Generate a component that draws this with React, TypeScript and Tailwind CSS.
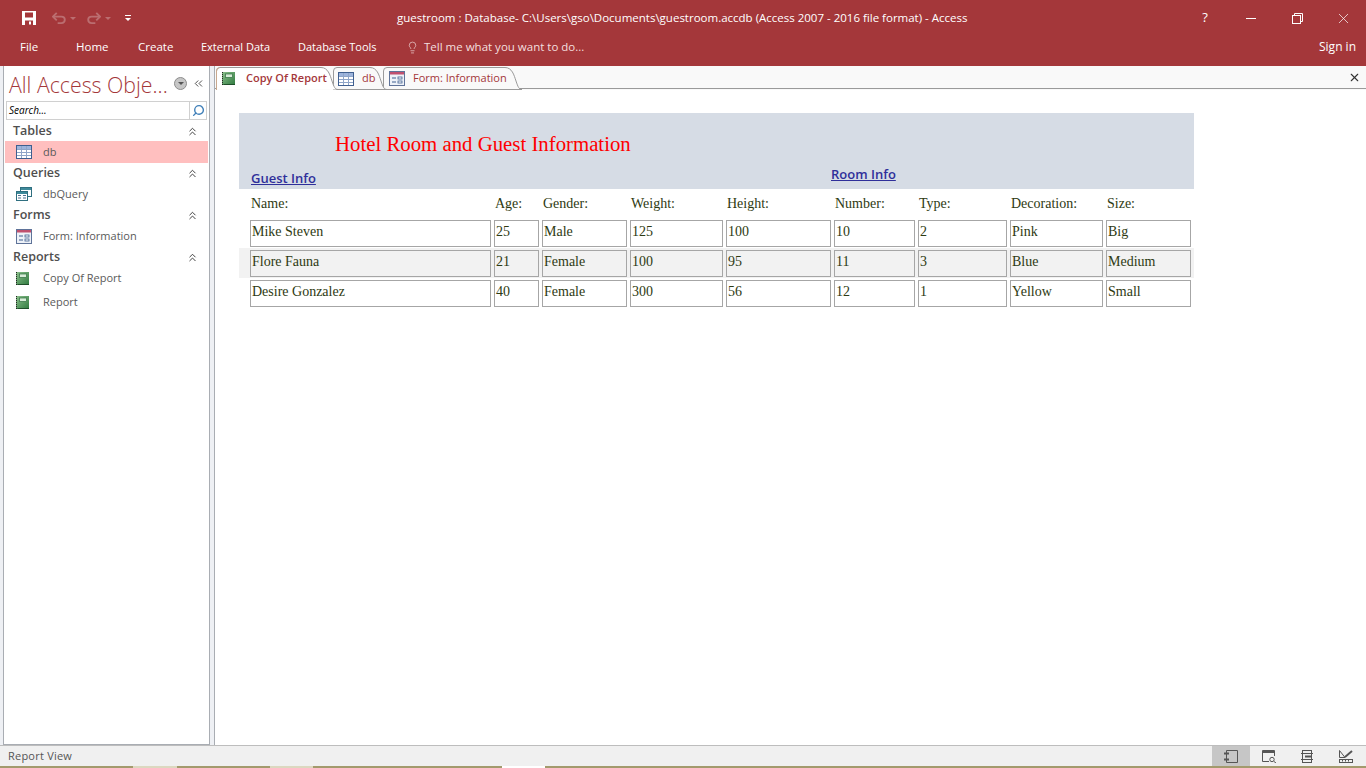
import { ChevronsUp, ChevronsLeft, Search, X, Lightbulb } from "lucide-react";

const uiFont = "font-['Open_Sans',sans-serif]";
const serifFont = "font-['Liberation_Serif',serif]";

function TableIcon({ className = "" }: { className?: string }) {
  return (
    <svg viewBox="0 0 16 14" className={className}>
      <rect x="0.5" y="0.5" width="15" height="13" fill="#fff" stroke="#3f5f8f" />
      <rect x="1" y="1" width="14" height="3" fill="#9db4dc" />
      <path d="M1 4.5H15M1 7.5H15M1 10.5H15M5.5 1V13M10.5 1V13" stroke="#8fa5c8" strokeWidth="1" />
    </svg>
  );
}

function QueryIcon({ className = "" }: { className?: string }) {
  return (
    <svg viewBox="0 0 16 14" className={className}>
      <rect x="4.5" y="0.5" width="11" height="9" fill="#fff" stroke="#2f6f80" />
      <rect x="5" y="1" width="10" height="2" fill="#3f8a9a" />
      <rect x="0.5" y="4.5" width="11" height="9" fill="#fff" stroke="#2f6f80" />
      <rect x="1" y="5" width="10" height="2" fill="#3f8a9a" />
      <path d="M2 8.5H5M7 8.5H10M2 11H5M7 11H10" stroke="#4f6f90" strokeWidth="1.2" />
    </svg>
  );
}

function FormIcon({ className = "" }: { className?: string }) {
  return (
    <svg viewBox="0 0 16 15" className={className}>
      <rect x="0.5" y="0.5" width="15" height="14" fill="#eef2f8" stroke="#5f7399" />
      <rect x="1" y="1" width="14" height="2.5" fill="#c0506f" />
      <path d="M3 7H7M3 11H7" stroke="#3f5f8f" strokeWidth="1.2" />
      <rect x="9" y="6" width="4" height="2" fill="#fff" stroke="#3f5f8f" strokeWidth="0.8" />
      <rect x="9" y="10" width="4" height="2" fill="#fff" stroke="#3f5f8f" strokeWidth="0.8" />
    </svg>
  );
}

function ReportIcon({ className = "" }: { className?: string }) {
  return (
    <svg viewBox="0 0 13 13" className={className}>
      <defs>
        <linearGradient id="rep" x1="0" y1="0" x2="1" y2="1">
          <stop offset="0" stopColor="#8cc08c" />
          <stop offset="1" stopColor="#2f7a3f" />
        </linearGradient>
      </defs>
      <rect x="0" y="0" width="13" height="13" fill="url(#rep)" />
      <path d="M0.5 0V13" stroke="#222" strokeWidth="1" strokeDasharray="1 1" />
      <rect x="3.5" y="2" width="7" height="3.5" fill="#d8ecd8" stroke="#2f6f3f" strokeWidth="0.7" />
      <path d="M1.5 12.5H13" stroke="#1f4f2a" strokeWidth="1" />
    </svg>
  );
}

function SaveIcon() {
  return (
    <svg viewBox="0 0 14 14" className="w-[14px] h-[14px]">
      <path d="M0 0H14V14H0Z" fill="#fff" />
      <rect x="3" y="1.5" width="8" height="5" fill="#a4373a" />
      <rect x="3" y="9.5" width="8" height="4.5" fill="#a4373a" />
      <rect x="7" y="10.5" width="2" height="3" fill="#fff" />
    </svg>
  );
}

function Caret({ color = "#bb6e70" }: { color?: string }) {
  return <span className="w-0 h-0 border-x-[3px] border-x-transparent border-t-[3px]" style={{ borderTopColor: color }} />;
}

function UndoIcon({ flip = false }: { flip?: boolean }) {
  return (
    <svg viewBox="0 0 16 13" className={`w-[15px] h-[12px] ${flip ? "-scale-x-100" : ""}`} fill="none" stroke="#bb6e70" strokeWidth="2">
      <path d="M1 5H10C15 5 15 12 10 12H6" />
      <path d="M5 1L1 5L5 9" />
    </svg>
  );
}

function TitleBar() {
  return (
    <div className="h-[36px] flex items-center relative text-white">
      <div className="flex items-center pl-[22px]">
        <SaveIcon />
        <div className="ml-[16px] flex items-center gap-[3px]"><UndoIcon /><Caret /></div>
        <div className="ml-[10px] flex items-center gap-[4px]"><UndoIcon flip /><Caret /></div>
        <div className="ml-[14px] flex flex-col items-center gap-[2px]">
          <span className="w-[6px] h-px bg-white" />
          <Caret color="#fff" />
        </div>
      </div>
      <div className={`absolute left-[397px] top-[9px] text-[11.5px] leading-[17px] whitespace-nowrap ${uiFont}`}>
        guestroom : Database- C:\Users\gso\Documents\guestroom.accdb (Access 2007 - 2016 file format) - Access
      </div>
      <div className="ml-auto flex items-center">
        <span className={`w-[46px] text-center text-[13px] ${uiFont}`}>?</span>
        <span className="w-[46px] flex justify-center"><span className="w-[10px] h-px bg-white" /></span>
        <span className="w-[46px] flex justify-center">
          <svg viewBox="0 0 11 11" className="w-[11px] h-[11px]" fill="none" stroke="#fff">
            <rect x="0.5" y="2.5" width="8" height="8" />
            <path d="M2.5 2.5V0.5H10.5V8.5H8.5" />
          </svg>
        </span>
        <span className="w-[46px] flex justify-center"><X size={17} strokeWidth={1} /></span>
      </div>
    </div>
  );
}

function RibbonTabs() {
  return (
    <div className={`h-[30px] pb-[8px] flex items-center text-white text-[11px] ${uiFont}`}>
      <span className="ml-[20px] w-[56px] text-[11.5px]">File</span>
      <span className="w-[62px] text-[11.5px]">Home</span>
      <span className="w-[63px] text-[11.5px]">Create</span>
      <span className="w-[97px]">External Data</span>
      <span className="w-[108px]">Database Tools</span>
      <span className="flex items-center gap-[5px] text-[11.5px] text-[#f3dfdf]">
        <Lightbulb size={13} strokeWidth={1.2} />
        Tell me what you want to do...
      </span>
      <span className="ml-auto mr-[10px] text-[12px]">Sign in</span>
    </div>
  );
}

function GroupHeader({ label }: { label: string }) {
  return (
    <div className="h-[20px] flex items-center justify-between pl-[8px] pr-[9px]">
      <span className={`text-[12.5px] font-semibold text-[#4f4f4f] ${uiFont}`}>{label}</span>
      <ChevronsUp size={13} strokeWidth={1.7} className="text-[#333]" />
    </div>
  );
}

function NavItem({ label, icon, active, className = "" }: { label: string; icon: React.ReactNode; active?: boolean; className?: string }) {
  return (
    <div className={`h-[22px] flex items-center ${active ? "bg-[#ffbfbf]" : ""} ${className}`}>
      <span className="w-[38px] pl-[11px] flex items-center">{icon}</span>
      <span className={`text-[11px] text-[#5a5a5a] ${uiFont}`}>{label}</span>
    </div>
  );
}

function Sidebar() {
  return (
    <aside className="w-[215px] shrink-0 flex bg-[#eef0f4]">
      <div className="ml-[3px] w-[207px] bg-white border-x border-b border-[#a9adb3] flex flex-col">
        <div className="h-[35px] flex items-center pl-[5px] pr-[4px]">
          <span className={`pt-[2px] text-[21.3px] font-light text-[#a4373a] whitespace-nowrap ${uiFont}`}>All Access Obje...</span>
          <span className="ml-auto w-[13px] h-[13px] rounded-full bg-[#c6c6c6] border border-[#8c8c8c] flex items-center justify-center">
            <Caret color="#555" />
          </span>
          <ChevronsLeft size={13} strokeWidth={1.7} className="ml-[5px] text-[#444]" />
        </div>
        <div className="mx-[2px] h-[19px] border border-[#d0d0d0] flex items-center">
          <span className={`flex-1 pl-[2px] text-[10px] italic text-black ${uiFont}`}>Search...</span>
          <span className="w-[17px] h-full border-l border-[#d0d0d0] flex items-center justify-center">
            <Search size={13} strokeWidth={2.6} className="text-[#3f7fb8] -scale-x-100" />
          </span>
        </div>
        <div className="mt-[1px] flex flex-col pl-px pr-px">
          <GroupHeader label="Tables" />
          <NavItem label="db" active icon={<TableIcon className="w-[16px] h-[14px]" />} />
          <GroupHeader label="Queries" />
          <NavItem label="dbQuery" icon={<QueryIcon className="w-[16px] h-[14px]" />} />
          <GroupHeader label="Forms" />
          <NavItem label="Form: Information" icon={<FormIcon className="w-[16px] h-[15px]" />} />
          <GroupHeader label="Reports" />
          <NavItem label="Copy Of Report" icon={<ReportIcon className="w-[13px] h-[13px]" />} />
          <NavItem label="Report" className="mt-[2px]" icon={<ReportIcon className="w-[13px] h-[13px]" />} />
        </div>
      </div>
    </aside>
  );
}

function DocTab({ label, icon, active, width, outline, z, iconLeft }: {
  label: string;
  icon: React.ReactNode;
  active?: boolean;
  width: string;
  outline: number;
  z: string;
  iconLeft: string;
}) {
  const top = `M0.5 23V4Q0.5 0.5 4 0.5H${outline - 17}C${outline - 10} 0.5 ${outline - 8} 8 ${outline - 6} 14C${outline - 4} 20 ${outline - 3} 22.5 ${outline} 22.5`;
  return (
    <div className={`relative h-[23px] flex items-center ${width} ${z}`}>
      <svg width={outline} height={23} className="absolute left-0 top-0" fill="none">
        <path d={`${top}H0.5Z`} fill={active ? "#fff" : "#f9f9f9"} />
        <path d={active ? top : `${top}H0.5`} stroke="#9a9a9a" />
        {active && <path d="M0.5 23V4Q0.5 1 3 0.8" stroke="#c9a98f" />}
      </svg>
      <span className={`relative ${iconLeft} w-[24px] flex items-center`}>{icon}</span>
      <span className={`relative pb-[1px] text-[11px] text-[#a4373a] whitespace-nowrap ${active ? "font-semibold" : ""} ${uiFont}`}>{label}</span>
    </div>
  );
}

const columns = ["Name:", "Age:", "Gender:", "Weight:", "Height:", "Number:", "Type:", "Decoration:", "Size:"];
const rows = [
  ["Mike Steven", "25", "Male", "125", "100", "10", "2", "Pink", "Big"],
  ["Flore Fauna", "21", "Female", "100", "95", "11", "3", "Blue", "Medium"],
  ["Desire Gonzalez", "40", "Female", "300", "56", "12", "1", "Yellow", "Small"],
];
const gridCols = "grid grid-cols-[241px_45px_85px_93px_105px_81px_89px_93px_85px] gap-x-[3px]";

function Report() {
  return (
    <div className={`mt-[23px] ml-[24px] w-[955px] ${serifFont}`}>
      <div className="h-[76px] bg-[#d6dce5] relative">
        <div className="pt-[17px] pl-[96px] text-[20.8px] leading-[28px] text-[#ff0000]">Hotel Room and Guest Information</div>
        <a className={`absolute left-[12px] top-[56px] text-[13px] font-semibold underline text-[#2f2f9a] ${uiFont}`}>Guest Info</a>
        <a className={`absolute left-[592px] top-[52px] text-[13px] font-semibold underline text-[#2f2f9a] ${uiFont}`}>Room Info</a>
      </div>
      <div className={`${gridCols} pl-[11px] h-[29px] items-center text-[14px] text-[#2e3a12]`}>
        {columns.map((c) => (
          <span key={c} className="pl-px">{c}</span>
        ))}
      </div>
      {rows.map((row, i) => (
        <div key={row[0]} className={`${gridCols} pl-[11px] h-[30px] pb-px items-end ${i === 1 ? "bg-[#f2f2f2]" : ""}`}>
          {row.map((v, j) => (
            <div key={j} className="h-[27px] border border-[#a6a6a6] pl-px pb-[4px] flex items-center text-[14px] text-[#2e3a12]">{v}</div>
          ))}
        </div>
      ))}
    </div>
  );
}

function StatusBar() {
  return (
    <div className="h-[23px] shrink-0 flex flex-col">
      <div className="h-[21px] bg-[#f0f0f0] border-t border-[#bdbdbd] flex items-center">
        <span className={`ml-[8px] text-[11px] text-[#555] tracking-[0.02em] ${uiFont}`}>Report View</span>
        <div className="ml-auto flex h-full">
          <span className="w-[38px] bg-[#c6c6c6] flex items-center justify-center">
            <svg viewBox="0 0 14 13" className="w-[14px] h-[13px]" fill="none" stroke="#555">
              <path d="M2.5 0.5H13.5V12.5H2.5Z" />
              <path d="M0 3.5H5M0 9.5H5" strokeWidth="2" />
            </svg>
          </span>
          <span className="w-[38px] flex items-center justify-center">
            <svg viewBox="0 0 15 13" className="w-[15px] h-[13px]" fill="none" stroke="#555">
              <path d="M0.5 11.5V0.5H12.5V6" />
              <path d="M0 2H13" strokeWidth="2" />
              <path d="M0.5 11.5H7" />
              <circle cx="10" cy="9.5" r="2.2" />
              <path d="M12 11.5L14 13" />
            </svg>
          </span>
          <span className="w-[38px] flex items-center justify-center">
            <svg viewBox="0 0 12 13" className="w-[12px] h-[13px]" fill="none" stroke="#555">
              <rect x="1.5" y="0.5" width="9" height="12" />
              <path d="M0 3.5H12M0 9.5H12" />
              <path d="M4 6.5H10" strokeWidth="2" />
            </svg>
          </span>
          <span className="w-[40px] flex items-center justify-center">
            <svg viewBox="0 0 15 13" className="w-[15px] h-[13px]" fill="none" stroke="#555">
              <path d="M0.5 0.5V7.5L6 7.5Z" />
              <path d="M6 7L13 1" strokeWidth="2" />
              <rect x="0.5" y="9.5" width="13" height="3" />
              <path d="M3.5 10V11.5M6.5 10V11.5M9.5 10V11.5" />
            </svg>
          </span>
        </div>
      </div>
      <div className="h-[2px] bg-[#a39a6d] flex">
        <span className="ml-[133px] w-[44px] bg-[#dcd8c0]" />
        <span className="ml-[93px] w-[43px] bg-[#dcd8c0]" />
        <span className="ml-[189px] w-[43px] bg-white" />
      </div>
    </div>
  );
}

export default function App() {
  return (
    <div className="w-[1366px] h-[768px] overflow-hidden flex flex-col bg-white">
      <div className="bg-[#a4373a] shrink-0">
        <TitleBar />
        <RibbonTabs />
      </div>
      <div className="flex-1 min-h-0 flex">
        <Sidebar />
        <main className="flex-1 min-w-0 flex flex-col border-l border-[#a9adb3] -ml-px">
          <div className="h-[24px] flex items-start pl-[1px] bg-[#f9f9f9] relative">
            <div className="w-full h-[23px] border-b border-[#9a9a9a] absolute top-0 left-0" />
            <div className="relative flex pt-[1px]">
              <DocTab label="Copy Of Report" active width="w-[117px]" outline={122} z="z-30" iconLeft="ml-[6px]" icon={<ReportIcon className="w-[13px] h-[13px]" />} />
              <DocTab label="db" width="w-[50px]" outline={54} z="z-20" iconLeft="ml-[5px]" icon={<TableIcon className="w-[16px] h-[14px]" />} />
              <DocTab label="Form: Information" width="w-[139px]" outline={139} z="z-10" iconLeft="ml-[6px]" icon={<FormIcon className="w-[16px] h-[15px]" />} />
            </div>
            <X size={13} strokeWidth={2} className="absolute right-[5px] top-[5px] text-[#333]" />
          </div>
          <Report />
        </main>
      </div>
      <StatusBar />
    </div>
  );
}
